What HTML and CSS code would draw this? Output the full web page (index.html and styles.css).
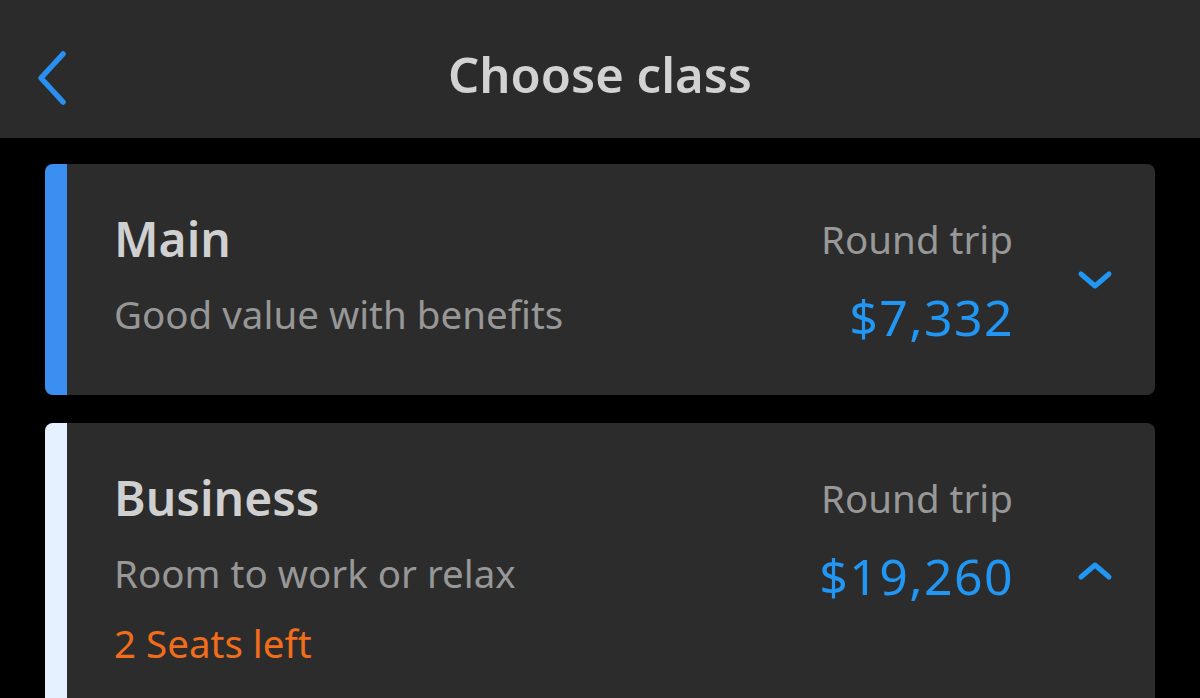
FILE: index.html
```html
<!DOCTYPE html>
<html lang="en">
<head>
<meta charset="utf-8">
<title>Choose class</title>
<link rel="stylesheet" href="styles.css">
</head>
<body>
<header class="topbar">
  <button class="back" aria-label="Back">
    <svg width="36" height="56" viewBox="0 0 36 56"><path d="M29 4 L7 28 L29 52" fill="none" stroke="#2a8ff2" stroke-width="5.5" stroke-linecap="round" stroke-linejoin="round"/></svg>
  </button>
  <h1 class="title">Choose class</h1>
</header>
<main class="list">
  <section class="card card--main">
    <div class="card-accent"></div>
    <div class="card-body">
      <div class="card-info">
        <h2 class="card-name">Main</h2>
        <p class="card-desc">Good value with benefits</p>
      </div>
      <div class="card-fare">
        <span class="fare-label">Round trip</span>
        <span class="fare-price">$7,332</span>
      </div>
      <div class="card-toggle card-toggle--down">
        <svg width="36" height="22" viewBox="0 0 36 22"><path d="M4 5 L18 17 L32 5" fill="none" stroke="#2196f3" stroke-width="5" stroke-linecap="round" stroke-linejoin="round"/></svg>
      </div>
    </div>
  </section>
  <section class="card card--business">
    <div class="card-accent"></div>
    <div class="card-body">
      <div class="card-info">
        <h2 class="card-name">Business</h2>
        <p class="card-desc">Room to work or relax</p>
        <p class="card-alert">2 Seats left</p>
      </div>
      <div class="card-fare">
        <span class="fare-label">Round trip</span>
        <span class="fare-price">$19,260</span>
      </div>
      <div class="card-toggle card-toggle--up">
        <svg width="36" height="22" viewBox="0 0 36 22"><path d="M4 17 L18 5 L32 17" fill="none" stroke="#2196f3" stroke-width="5" stroke-linecap="round" stroke-linejoin="round"/></svg>
      </div>
    </div>
  </section>
</main>
</body>
</html>
```
FILE: styles.css
```css
html, body {
  margin: 0;
  padding: 0;
  background: #000;
  font-family: "Noto Sans", "Open Sans", sans-serif;
  height: 698px;
  overflow: hidden;
}

.topbar {
  position: relative;
  height: 138px;
  box-sizing: border-box;
  padding-top: 10px;
  background: #2b2b2b;
  display: flex;
  align-items: center;
  justify-content: center;
}

.back {
  position: absolute;
  left: 34px;
  top: 50px;
  background: none;
  border: 0;
  padding: 0;
  display: flex;
}

.title {
  margin: 0;
  font-size: 49px;
  font-weight: 600;
  color: #d2d2d2;
  line-height: 1;
}

.list {
  padding: 26px 45px 0;
  display: flex;
  flex-direction: column;
  gap: 28px;
}

.card {
  display: flex;
  background: #2c2c2c;
  border-radius: 8px;
  overflow: hidden;
}

.card-accent {
  width: 22px;
  flex: none;
}

.card--main .card-accent { background: #3b8ff0; }
.card--business .card-accent { background: #e6f1ff; }

.card-body {
  flex: 1;
  display: flex;
  padding: 49px 0 0 47px;
}

.card--main .card-body { height: 182px; }
.card--business .card-body { height: 250px; }

.card-info {
  flex: 1;
}

.card-name {
  margin: 0;
  font-size: 48px;
  font-weight: 600;
  color: #d0d0d0;
  line-height: 52px;
}

.card-desc {
  margin: 23px 0 0;
  font-size: 38.5px;
  color: #979797;
  line-height: 52px;
}

.card-alert {
  margin: 18px 0 0;
  font-size: 38.5px;
  color: #f26d1b;
  line-height: 52px;
}

.card-fare {
  display: flex;
  flex-direction: column;
  align-items: flex-end;
}

.fare-label {
  font-size: 38.5px;
  color: #989898;
  line-height: 52px;
}

.fare-price {
  margin-top: 22px;
  font-size: 50px;
  color: #2196f3;
  line-height: 60px;
  letter-spacing: 1.4px;
  margin-right: -1px;
}

.card-toggle {
  width: 142px;
  flex: none;
  display: flex;
  justify-content: center;
  padding-left: 22px;
  box-sizing: border-box;
}

.card-toggle--down { padding-top: 56px; }
.card-toggle--up { padding-top: 88px; }
.card-toggle svg { display: block; }
```
